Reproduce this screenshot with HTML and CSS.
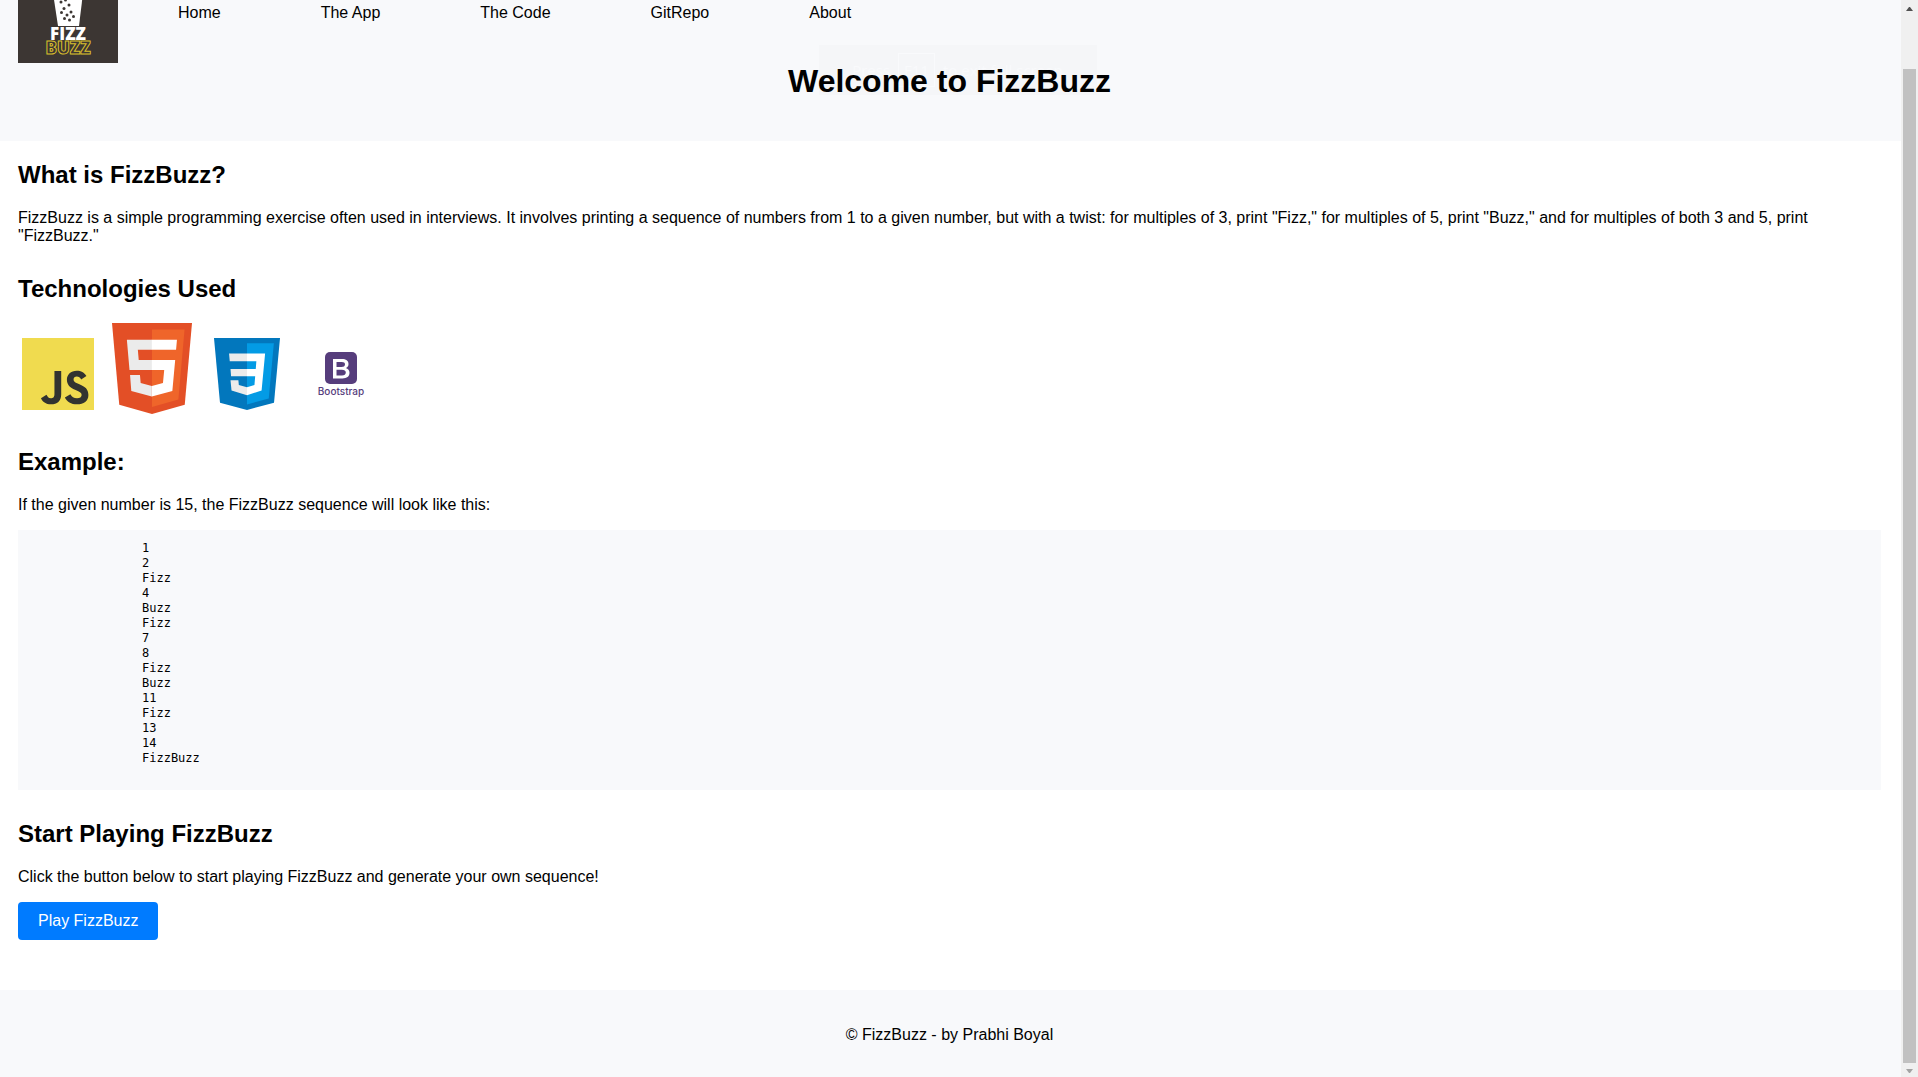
FILE: index.html
```html
<!DOCTYPE html>
<html lang="en">
<head>
<meta charset="utf-8">
<title>FizzBuzz</title>
<link rel="stylesheet" href="styles.css">
</head>
<body>
<div class="page">
  <header class="header">
    <nav class="nav">
      <svg class="logo" viewBox="0 37 100 63" role="img" aria-label="FizzBuzz logo">
        <rect width="100" height="100" fill="#3c3633"/>
        <path d="M35 30h30l-4 33H40z" fill="#fff"/>
        <g fill="#3c3633">
          <circle cx="43" cy="39" r="1.5"/><circle cx="47.5" cy="37" r="1.5"/><circle cx="51" cy="42" r="1.5"/>
          <circle cx="46" cy="45.5" r="1.5"/><circle cx="43.5" cy="49.5" r="1.5"/><circle cx="53" cy="49" r="1.5"/>
          <circle cx="49" cy="52" r="1.5"/><circle cx="55.5" cy="53.5" r="1.5"/><circle cx="46.5" cy="55.5" r="1.5"/><circle cx="51.5" cy="57" r="1.5"/>
        </g>
        <text class="logo-fizz" x="50" y="77" text-anchor="middle">FIZZ</text>
        <text class="logo-buzz" x="50" y="91" text-anchor="middle">BUZZ</text>
      </svg>
      <ul class="links">
        <li><a href="#">Home</a></li>
        <li><a href="#">The App</a></li>
        <li><a href="#">The Code</a></li>
        <li><a href="#">GitRepo</a></li>
        <li><a href="#">About</a></li>
      </ul>
    </nav>
    <div class="toast">Press <span class="key">F11</span> to exit full screen</div>
    <h1 class="title">Welcome to FizzBuzz</h1>
  </header>
  <main class="main">
    <section>
      <h2>What is FizzBuzz?</h2>
      <p>FizzBuzz is a simple programming exercise often used in interviews. It involves printing a sequence of numbers from 1 to a given number, but with a twist: for multiples of 3, print "Fizz," for multiples of 5, print "Buzz," and for multiples of both 3 and 5, print "FizzBuzz."</p>
    </section>
    <section>
      <h2>Technologies Used</h2>
      <div class="tech">
        <svg class="js" width="72" height="72" viewBox="0 0 630 630" role="img" aria-label="JavaScript">
          <rect width="630" height="630" fill="#f0db4f"/>
          <path fill="#323330" d="M423.200 492.190c12.690 20.720 29.200 35.950 58.400 35.950 24.530 0 40.200-12.260 40.200-29.200 0-20.300-16.100-27.490-43.100-39.300l-14.800-6.350c-42.720-18.200-71.100-41-71.100-89.200 0-44.400 33.830-78.200 86.700-78.200 37.640 0 64.700 13.100 84.200 47.400l-46.100 29.600c-10.150-18.200-21.100-25.370-38.100-25.370-17.340 0-28.330 11-28.330 25.370 0 17.760 11 24.950 36.400 35.950l14.800 6.340c50.300 21.570 78.700 43.560 78.700 93 0 53.300-41.870 82.500-98.100 82.500-54.980 0-90.500-26.200-107.880-60.540zm-209.130 5.130c9.300 16.500 17.760 30.450 38.100 30.450 19.450 0 31.720-7.610 31.720-37.200v-201.300h59.200v202.100c0 61.300-35.940 89.200-88.400 89.200-47.400 0-74.850-24.530-88.810-54.075z"/>
        </svg>
        <svg width="80" height="91" viewBox="30 0 452 512" preserveAspectRatio="none" role="img" aria-label="HTML5">
          <path fill="#e34f26" d="M71 460L30 0h452l-41 460-185 52"/>
          <path fill="#ef652a" d="M256 472l149-41 35-394H256"/>
          <path fill="#ebebeb" d="M256 208h-75l-5-58h80V94H114l15 171h127zm-1 147l-63-17-4-45h-56l7 89 116 32z"/>
          <path fill="#fff" d="M255 208v57h70l-7 73-63 17v59l116-32 16-174zm0-114v56h137l5-56z"/>
        </svg>
        <svg class="css" width="66" height="72" viewBox="30 0 452 512" preserveAspectRatio="none" role="img" aria-label="CSS3">
          <path fill="#0277bd" d="M71 460L30 0h452l-41 460-185 52"/>
          <path fill="#039be5" d="M256 472l149-41 35-394H256"/>
          <path fill="#ebebeb" d="M256 110H133l5 56h118zM256 220H143l4 52h109zM256 350l-56-15-3-35h-54l7 74 106 33z"/>
          <path fill="#fff" d="M256 110h124l-24 264-100 33v-57l51-15 5-63h-56v-52h60l4-54h-64z"/>
        </svg>
        <svg class="bootstrap" width="48" height="48" viewBox="0 0 48 48" role="img" aria-label="Bootstrap">
          <rect x="8" width="32" height="32" rx="5" fill="#563d7c"/>
          <path fill="#fff" fill-rule="evenodd" d="M16 7h9c4 0 6.500 1.800 6.500 5 0 2-1 3.500-2.700 4.100 2.300.6 3.700 2.400 3.700 4.700 0 3.600-2.700 5.700-7 5.700H16zM19.500 10v5h5c2.100 0 3.500-.8 3.500-2.500 0-1.800-1.200-2.500-3.200-2.500zM19.500 17.800v5.700H25c2.400 0 3.800-1 3.800-2.900s-1.500-2.800-4-2.800z"/>
          <text class="bootstrap-label" x="24" y="43" text-anchor="middle">Bootstrap</text>
        </svg>
      </div>
    </section>
    <section>
      <h2>Example:</h2>
      <p>If the given number is 15, the FizzBuzz sequence will look like this:</p>
      <pre class="sequence">1
2
Fizz
4
Buzz
Fizz
7
8
Fizz
Buzz
11
Fizz
13
14
FizzBuzz</pre>
    </section>
    <section>
      <h2>Start Playing FizzBuzz</h2>
      <p>Click the button below to start playing FizzBuzz and generate your own sequence!</p>
      <button class="play" type="button">Play FizzBuzz</button>
    </section>
  </main>
  <footer class="footer">© FizzBuzz - by Prabhi Boyal</footer>
</div>
<div class="scrollbar" aria-hidden="true">
  <svg width="7" height="4" viewBox="0 0 7 4"><path d="M0 4h7L4 0H3z" fill="#505050"/></svg>
  <div class="thumb"></div>
  <svg width="7" height="4" viewBox="0 0 7 4"><path d="M0 0h7L4 4H3z" fill="#a3a3a3"/></svg>
</div>
</body>
</html>
```
FILE: styles.css
```css
* {
  box-sizing: border-box;
}

body {
  margin: 0;
  min-height: 100vh;
  display: flex;
  background: #fff;
  color: #000;
  font: 16px/18px "Liberation Sans", Arial, sans-serif;
}

.page {
  flex: 1;
  min-width: 0;
  display: flex;
  flex-direction: column;
}

.header {
  position: relative;
  padding: 0 20px 42px 18px;
  background: #f8f9fb;
}

.nav {
  display: flex;
  gap: 60px;
}

.logo {
  display: block;
  width: 100px;
  height: 63px;
}

.logo-fizz,
.logo-buzz {
  font-family: "Open Sans", sans-serif;
  font-weight: 800;
  font-size: 17px;
}

.logo-fizz {
  fill: #fff;
}

.logo-buzz {
  fill: none;
  stroke: #d8bf2c;
  stroke-width: 1px;
}

.links {
  display: flex;
  gap: 100px;
  margin: 0;
  padding: 4px 0;
  list-style: none;
}

.links a {
  color: inherit;
  text-decoration: none;
}

.title {
  position: relative;
  margin: 0;
  font-size: 32px;
  line-height: 36px;
  text-align: center;
}

.toast {
  position: absolute;
  top: 45px;
  left: 50%;
  width: 278px;
  height: 50px;
  margin-left: -132px;
  display: flex;
  align-items: center;
  justify-content: center;
  gap: 8px;
  background: #f5f6f8;
  color: #f9fafc;
  font-family: "Open Sans", sans-serif;
  font-size: 15px;
  white-space: nowrap;
}

.key {
  padding: 7px 5px;
  border: 1px solid #f9fafc;
}

.main {
  flex: 1;
  display: flex;
  flex-direction: column;
  gap: 30px;
  padding: 20px 20px 48px 18px;
}

h2 {
  margin: 0 0 21px;
  font-size: 24px;
  line-height: 27px;
}

p {
  margin: 0;
}

.tech {
  display: flex;
  align-items: flex-end;
  gap: 18px;
  padding: 0 4px 4px;
}

.js,
.css {
  margin-bottom: 4px;
}

.css {
  margin-left: 4px;
}

.bootstrap {
  margin: 0 0 14px 19px;
}

.bootstrap-label {
  fill: #563d7c;
  font: 500 10px Inter, sans-serif;
}

.sequence {
  margin: 16px 0 0;
  padding: 11px 10px 24px 124px;
  background: #f8f9fb;
  font: 12px/15px "DejaVu Sans Mono", monospace;
}

.play {
  display: block;
  margin-top: 16px;
  padding: 10px 20px;
  border: 0;
  border-radius: 4px;
  background: #007bff;
  color: #fff;
  font: inherit;
}

.footer {
  padding: 36px 20px 33px 18px;
  background: #f8f9fb;
  text-align: center;
}

.scrollbar {
  width: 17px;
  display: flex;
  flex-direction: column;
  align-items: center;
  padding: 7px 2px 4px;
  background: #f0f0f0;
}

.thumb {
  flex: 1;
  width: 13px;
  margin: 58px 0 6px;
  background: #c1c1c1;
}
```
